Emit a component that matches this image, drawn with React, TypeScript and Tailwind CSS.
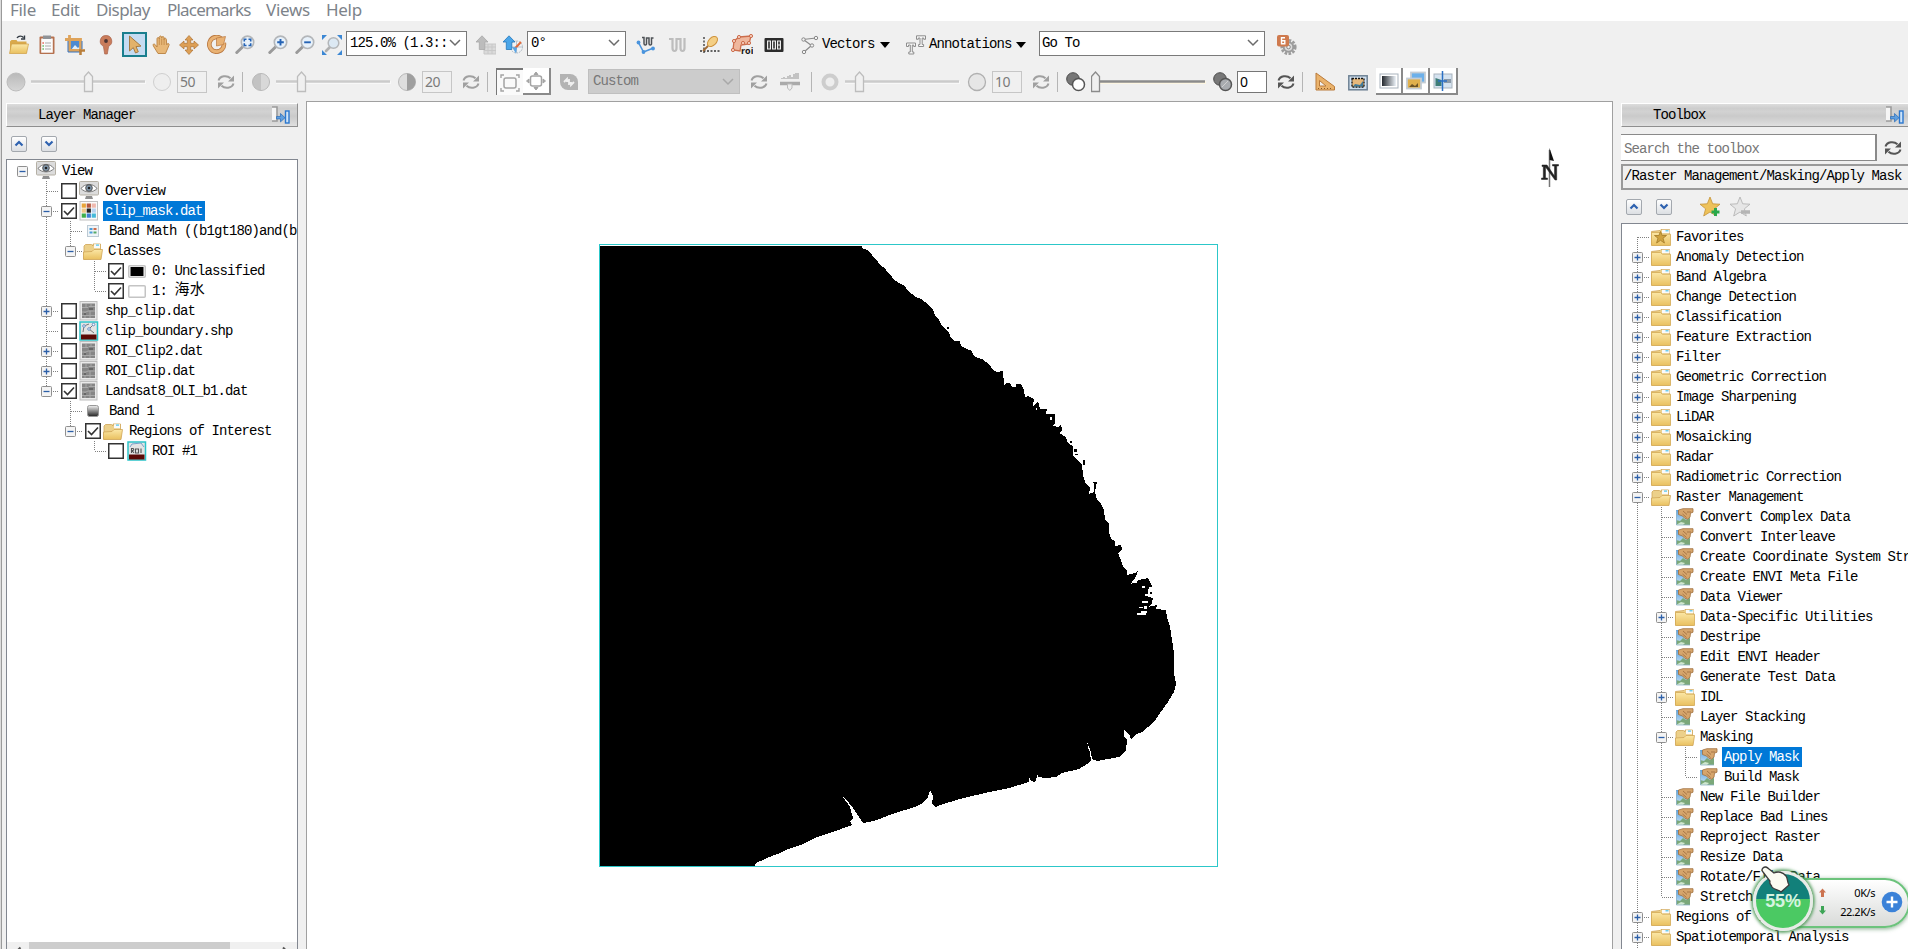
import React from "react";

type P = { children?: React.ReactNode; c?: string; w?: number; h?: number };

/** Small drawing area used by every icon. */
const Ico = ({ children, c = "", w = 20, h = 20 }: P) => (
  <svg width={w} height={h} viewBox={`0 0 ${w} ${h}`} className={`block shrink-0 ${c}`} fill="none">
    {children}
  </svg>
);

const Defs = () => (
  <svg width="0" height="0" className="absolute">
    <defs>
      <linearGradient id="fold" x1="0" y1="0" x2="0" y2="1">
        <stop offset="0" stopColor="#fbe7a6" />
        <stop offset="1" stopColor="#e9c05f" />
      </linearGradient>
      <linearGradient id="disc" x1="0" y1="0" x2="0" y2="1">
        <stop offset="0" stopColor="#b9b9b9" />
        <stop offset="1" stopColor="#d6d6d6" />
      </linearGradient>
      <linearGradient id="rule" x1="0" y1="0" x2="1" y2="0">
        <stop offset="0" stopColor="#23282e" />
        <stop offset="1" stopColor="#eef4fa" />
      </linearGradient>
      <linearGradient id="band" x1="0" y1="0" x2="0" y2="1">
        <stop offset="0" stopColor="#f4f4f4" />
        <stop offset="1" stopColor="#222" />
      </linearGradient>
      <linearGradient id="sky" x1="0" y1="0" x2="0" y2="1">
        <stop offset="0" stopColor="#5ba4e4" />
        <stop offset="1" stopColor="#cfe6f5" />
      </linearGradient>
    </defs>
  </svg>
);

/* ---------- tool bar icons ---------- */

const OpenIcon = ({ c }: P) => (
  <Ico c={c}>
    <path d="M1 18V6.500l1.500-1.500h5l1 1.500h9V18z" fill="#d9a94c" />
    <path d="M.5 18.500 2.500 9h17l-2 9.500z" fill="url(#fold)" stroke="#cf9f45" strokeWidth=".7" />
    <path d="M8 3c1.500-2.500 5-2.500 6.500-.3M15.500 .5v3.500H12" stroke="#333b44" strokeWidth="1.400" />
  </Ico>
);
const ClipboardIcon = ({ c }: P) => (
  <Ico c={c}>
    <rect x="2.500" y="1.500" width="15" height="17.500" rx="1" fill="#b5714f" />
    <rect x="4.200" y="3.500" width="11.600" height="14.200" fill="#fbfbfb" />
    <rect x="6" y="0.500" width="8" height="3.500" fill="#8f9296" />
    <path d="M8 8h6M8 11h6M8 14h6" stroke="#a9a9a9" strokeWidth="1" />
    <path d="M5.500 8h1.300" stroke="#e04b3a" strokeWidth="1.500" />
    <path d="M5.500 11h1.300M5.500 14h1.300" stroke="#4db14a" strokeWidth="1.500" />
  </Ico>
);
const CropIcon = ({ c }: P) => (
  <Ico c={c}>
    <rect x="5" y="5" width="11" height="11" fill="#4d8ad0" />
    <path d="M6 15l4-5 3 3 2-2v4z" fill="#dfeefb" />
    <path d="M0 4.500h15.500V17" stroke="#dea35a" strokeWidth="2.800" />
    <path d="M4.500 0v15.500H15" stroke="#dea35a" strokeWidth="2.800" />
    <path d="M3 6v11h12M17 6v8" stroke="#3572c0" strokeWidth="1" />
    <path d="M14 15.500h6M15.500 16v4" stroke="#b97f3b" strokeWidth="2.500" />
  </Ico>
);
const PinIcon = ({ c }: P) => (
  <Ico c={c}>
    <path d="M10 .5a5.700 5.700 0 0 1 2.600 10.800L11.300 19H8.700L7.400 11.300A5.700 5.700 0 0 1 10 .5z" fill="#c97c5b" stroke="#a9624a" strokeWidth=".7" />
    <circle cx="10" cy="6" r="1.900" fill="#4b3434" />
  </Ico>
);
const ArrowIcon = () => (
  <Ico w={21} h={21}>
    <path d="M5.500 2v15l3.800-3.400L11.500 19l2.800-1.200-2.300-5.200 5-.5z" fill="#e3b26a" stroke="#a67b42" strokeWidth="1" />
  </Ico>
);
const HandIcon = ({ c }: P) => (
  <Ico c={c}>
    <path d="M6 18.500l-4-6.500c-2-3 0-4 1.500-2L5 12V4c0-2 2.300-2 2.300 0V2.500c0-2 2.400-2 2.400 0V3c0-2 2.400-2 2.400 0v1.500c0-2 2.300-1.700 2.300.3l.3 5c.8-2 3-1.500 2.300.5L15 15l-1.500 3.500z" fill="#e8b878" stroke="#b9803f" strokeWidth=".9" />
    <path d="M7.300 4v6M9.700 3.500V10M12.100 4v6" stroke="#b9803f" strokeWidth=".7" />
  </Ico>
);
const MoveIcon = ({ c }: P) => (
  <Ico c={c}>
    <path d="M10 .5 14 5h-2.300v3.300H15V6l4.500 4-4.500 4v-2.300h-3.300V15H14l-4 4.500L6 15h2.300v-3.300H5V14L.5 10 5 6v2.300h3.300V5H6z" fill="#dd9f55" stroke="#ad7335" strokeWidth=".7" />
  </Ico>
);
const RotateIcon = ({ c }: P) => (
  <Ico c={c}>
    <path d="M14 3.500A7.300 7.300 0 1 0 16.800 8" stroke="#b9773f" strokeWidth="4.600" />
    <path d="M14 3.500A7.300 7.300 0 1 0 16.800 8" stroke="#e9b274" strokeWidth="3" />
    <path d="M9.500 11V3l9-1.500-2 8z" fill="#e9b274" stroke="#b9773f" strokeWidth=".7" />
  </Ico>
);
const Zoom = ({ c, kind }: { c: string; kind: string }) => (
  <Ico c={c}>
    <path d="M1.800 17.500 7.500 12" stroke="#9a9a9a" strokeWidth="3" strokeLinecap="round" />
    <circle cx="12.500" cy="7.300" r="6.200" fill="#e7f1fa" stroke="#b3b6b9" strokeWidth="1.600" />
    {kind === "in" && <path d="M12.500 4v6.600M9.200 7.300h6.600" stroke="#2563b4" strokeWidth="1.900" />}
    {kind === "out" && <path d="M9.200 7.300h6.600" stroke="#2563b4" strokeWidth="1.900" />}
    {kind === "sel" && (
      <path d="M9.300 6.500V4.300h2.200M13.500 4.300h2.200v2.200M15.700 8.300v2.200h-2.200M11.500 10.500H9.300V8.300" stroke="#2563b4" strokeWidth="1.600" />
    )}
  </Ico>
);
const FitIcon = ({ c }: P) => (
  <Ico c={c}>
    <path d="M4 16 8 12" stroke="#b0b0b0" strokeWidth="2.600" strokeLinecap="round" />
    <circle cx="11.500" cy="8" r="5.300" fill="#dce9f4" stroke="#b3b6b9" strokeWidth="1.500" />
    <path d="M0 5V0h5zM20 5V0h-5zM0 15v5h5zM20 15v5h-5z" fill="#3b87d4" />
  </Ico>
);
const UpGrid = ({ c, blue }: { c: string; blue?: boolean }) => (
  <Ico c={c}>
    {blue ? (
      <>
        <circle cx="13.500" cy="12" r="6" fill="#f1f3f5" stroke="#a9b4bf" strokeDasharray="1.500 1" />
        <path d="M13.500 6v12M8 12h11" stroke="#b9c3cd" />
        <path d="M11 14.500 18 7" stroke="#e06a3b" strokeWidth="2" />
        <path d="M9 12l4 6.500 1-6z" fill="#5aa6e6" />
      </>
    ) : (
      <path d="M8 9h12v10H8z M12 9v10M16 9v10M8 12h12M8 15.500h12" fill="#dadada" stroke="#c8c8c8" />
    )}
    <path d="M6 .8 12 7H8.800v7.500H3.300V7H0z" fill={blue ? "#4aa5e8" : "#bcbcbc"} stroke={blue ? "#2477bb" : "#a8a8a8"} strokeWidth=".8" />
  </Ico>
);
const SpecBlue = ({ c }: P) => (
  <Ico c={c}>
    <path d="M6 2.500h2v6q0 1.500 1.300 1.500t1.200-1.500V3H13v5.500q0 1.500 1.300 1.500t1.200-1.500V3h2" stroke="#4d5155" strokeWidth="1.500" />
    <path d="M2.500 7.500 7.500 17l10-4" stroke="#4a94dd" strokeWidth="1.600" />
    <circle cx="2.500" cy="7.500" r="1.900" fill="#4a94dd" />
    <circle cx="7.500" cy="17" r="1.900" fill="#4a94dd" />
    <circle cx="17" cy="13.500" r="1.900" fill="#4a94dd" />
  </Ico>
);
const SpecGray = ({ c }: P) => (
  <Ico c={c}>
    <path d="M1 4h3.500v9q0 3 2 3t2-3V4h4v9q0 3 2 3t2-3V3" stroke="#bdbdbd" strokeWidth="2.200" />
  </Ico>
);
const LassoIcon = ({ c }: P) => (
  <Ico c={c}>
    <path d="M4 2v17M0 16h20" stroke="#333" strokeWidth="1.300" strokeDasharray="2 1.500" />
    <ellipse cx="12.500" cy="6.500" rx="6" ry="3.800" transform="rotate(-45 12.500 6.500)" fill="#f4cf85" stroke="#cf943f" />
    <path d="M8 11l-5 5" stroke="#a26a33" strokeWidth="1.800" />
  </Ico>
);
const RoiIcon = ({ c }: P) => (
  <Ico c={c} w={22} h={21}>
    <path d="M3 7 8 3l12-1-2 8-8 1-1 6-7-1z" fill="#efb79d" stroke="#cc6d4c" strokeWidth="1.300" />
    {[[3, 7], [8, 3], [20, 2], [18, 9], [12, 9], [2, 16]].map(([x, y]) => (
      <circle key={`${x}-${y}`} cx={x} cy={y} r="1.600" fill="#f6d0c0" stroke="#cc6d4c" />
    ))}
    <text x="10" y="20" fontSize="9" fontWeight="700" fill="#151515" fontFamily="Open Sans" textLength="11.500">roi</text>
  </Ico>
);
const CounterIcon = ({ c }: P) => (
  <Ico c={c}>
    <rect x=".5" y="3" width="19" height="14" rx="1" fill="#2b2b2b" />
    {[3, 8, 13].map((x) => (
      <rect key={x} x={x + 0.5} y="6" width="3" height="8" fill="#555" stroke="#eee" />
    ))}
    <path d="M13 10h4" stroke="#eee" />
  </Ico>
);
const VectorsIcon = ({ c }: P) => (
  <Ico c={c}>
    <path d="M3 4.500 16 3M4 5l7.500 5.500L4 17" stroke="#8a8a8a" strokeWidth="1.200" />
    {[[3.500, 4.500], [16, 3], [12, 10.500], [4, 17]].map(([x, y]) => (
      <circle key={y} cx={x} cy={y} r="1.700" fill="#f3f3f3" stroke="#888" />
    ))}
  </Ico>
);
const AnnotIcon = ({ c }: P) => (
  <Ico c={c}>
    <path d="M10.500 .8h9v3.500h-1.800V3h-1.500v6.500h1.400v2h-5v-2h1.400V3h-1.700v1.300h-1.800z" fill="#f7f7f7" stroke="#8d8d8d" />
    <path d="M.5 8h9v3.500H7.700V10H6.300v7h1.500v2H2.800v-2h1.500v-7H2.500v1.500h-2z" fill="#f7f7f7" stroke="#8d8d8d" />
  </Ico>
);
const GearIcon = ({ c }: P) => (
  <Ico c={c}>
    <circle cx="11.500" cy="12" r="6.800" stroke="#9c9c9c" strokeWidth="2.600" strokeDasharray="2.600 1.400" />
    <circle cx="11.500" cy="12" r="4.800" fill="#dcdcdc" stroke="#9b9b9b" strokeWidth="2" />
    <circle cx="11.500" cy="12" r="1.800" fill="#f0f0f0" stroke="#8b8b8b" />
    <rect x="0" y="0" width="12" height="11.500" rx="2" fill="#cf7a4e" />
    <path d="M8 2.800H4.500v6h3.300V5.800H5" stroke="#fff" strokeWidth="1.400" />
  </Ico>
);
const Refresh = ({ c, tone = "#a0a0a0" }: { c: string; tone?: string }) => (
  <Ico c={c} w={18} h={16}>
    <path d="M1.500 6.500C3 1.500 10 1 13.500 4.200" stroke={tone} strokeWidth="2" />
    <path d="M17 1.500v6h-6z" fill={tone} />
    <path d="M16.500 9.500c-1.500 5-8.500 5.500-12 2.300" stroke={tone} strokeWidth="2" />
    <path d="M1 14.500v-6h6z" fill={tone} />
  </Ico>
);
const Down = ({ c }: P) => (
  <Ico c={c} w={10} h={6}>
    <path d="M0 0h10L5 6z" fill="#000" />
  </Ico>
);
const Chevron = ({ tone = "#6b6b6b" }: { tone?: string }) => (
  <Ico w={12} h={8} c="ml-auto mr-[5px]">
    <path d="M1 1l5 5 5-5" stroke={tone} strokeWidth="1.500" />
  </Ico>
);
const Sep = ({ c }: P) => <div className={`h-[20px] w-px shrink-0 bg-[#b5b5b5] ${c}`} />;

const Slider = ({ c, at, dark }: { c: string; at: number; dark?: boolean }) => (
  <Ico c={c} w={115} h={22}>
    <path d="M0 11.500h115" stroke={dark ? "#fdf6e2" : "#f8f8f8"} strokeWidth="3" />
    <path d="M0 10.500h114" stroke={dark ? "#8b8b8b" : "#cbcbcb"} strokeWidth="2.500" />
    <path d={`M${at + 0.5} 20.500V5.500L${at + 4.500} 1l4 4.500v15z`} fill="#f0f0f0" stroke={dark ? "#8b8b8b" : "#bdbdbd"} strokeWidth="1.300" />
  </Ico>
);
const Num = ({ c, v, dark }: { c: string; v: string; dark?: boolean }) => (
  <div
    className={`flex h-[22px] w-[30px] shrink-0 items-center pl-[2px] text-[14px] tracking-[-0.5px] [font-family:'Noto_Sans',sans-serif] ${c} ${
      dark ? "border border-[#767676] bg-white text-black" : "border border-[#c6c6c6] text-[#7b7b7b]"
    }`}
  >
    {v}
  </div>
);

/* ---------- panels ---------- */

const Dock = () => (
  <Ico c="ml-auto" w={18} h={18}>
    <path d="M0 1h5v14H0" stroke="#9b9b9b" strokeWidth="1.600" fill="#f5f5f5" />
    <path d="M4.500 10.500H8.500V7.500l4.500 4.200-4.500 4.200v-3h-4z" fill="#5f9fe0" stroke="#2a6cb8" strokeWidth=".7" />
    <rect x="13.500" y="5" width="3.500" height="12" fill="#cfe4f8" stroke="#2a77cf" strokeWidth="1.400" />
  </Ico>
);
const Fold = ({ c, up }: { c: string; up?: boolean }) => (
  <div className={`flex h-[16px] w-[16px] shrink-0 items-center justify-center rounded-[2px] border border-[#a3a8ae] bg-gradient-to-b from-white to-[#dcdfe3] ${c}`}>
    <Ico w={10} h={7}>
      <path d={up ? "M1.500 5.500 5 2l3.500 3.500" : "M1.500 1.500 5 5l3.500-3.500"} stroke="#2e62b0" strokeWidth="2.200" />
    </Ico>
  </div>
);

/* ---------- tree parts ---------- */

type Link = "none" | "pass" | "tee" | "end" | "top";
const Cell = ({ link, box }: { link: Link; box?: "+" | "-" }) => (
  <Ico w={24} h={20}>
    {(link === "pass" || link === "tee") && <path d="M11.500 0v20" stroke="#808080" strokeDasharray="1 1" />}
    {link === "end" && <path d="M11.500 0v10" stroke="#808080" strokeDasharray="1 1" />}
    {link === "top" && <path d="M11.500 10v10" stroke="#808080" strokeDasharray="1 1" />}
    {link !== "none" && link !== "pass" && <path d="M12 10.500h12" stroke="#808080" strokeDasharray="1 1" />}
    {box && (
      <>
        <rect x="6.500" y="5.500" width="10" height="10" rx="1" fill="#f4f4f4" stroke="#8f8f8f" />
        <path d={box === "+" ? "M8.500 10.500h6M11.500 7.500v6" : "M8.500 10.500h6"} stroke="#2c5fa8" strokeWidth="1.300" />
      </>
    )}
  </Ico>
);
const Check = ({ on, c }: { on?: boolean; c: string }) => (
  <Ico c={c} w={16} h={16}>
    <rect x=".75" y=".75" width="14.500" height="14.500" fill="#fff" stroke="#333" strokeWidth="1.500" />
    {on && <path d="M3 8l3.500 3.500L13 4.500" stroke="#333" strokeWidth="1.600" />}
  </Ico>
);
const Folder = ({ c, open, star }: { c: string; open?: boolean; star?: boolean }) => (
  <Ico c={c} w={20} h={17}>
    {open ? (
      <>
        <path d="M1 16V3l1.500-1.500h6L10 3V1h7.500v14z" fill="#ecd08a" stroke="#cfa555" strokeWidth=".8" />
        <path d="M11 1.200h6v4h-6z" fill="#fafafa" />
        <path d="M13 1.500h3v1.200h-3z" fill="#4cc3ea" />
        <path d="M.5 16.500V9L9 8.500l2-2h8.500l-1.500 10z" fill="url(#fold)" stroke="#cfa555" strokeWidth=".8" />
      </>
    ) : (
      <>
        <path d="M.5 16V2.500L9 1.500l1-1h8.500V16z" fill="#ecd08a" stroke="#cfa555" strokeWidth=".8" />
        <path d="M11 .8h7.500v3.500H11z" fill="#fafafa" />
        <path d="M14.500 1.200h3v1.200h-3z" fill="#4cc3ea" />
        <path d="M.5 16.500V3.500H9.500l2 1.700h8v11.300z" fill="url(#fold)" stroke="#d3a955" strokeWidth=".8" />
      </>
    )}
    {star && <path d="M9.500 2.500l1.600 4h4.400L12 9.200l1.400 4.800-3.900-2.700L5.600 14 7 9.200 3.500 6.500h4.400z" fill="#cfa23f" stroke="#a8802c" strokeWidth=".9" />}
  </Ico>
);
const Tool = ({ c }: P) => (
  <Ico c={c} w={19} h={18}>
    <path d="M1 2h14v15H1z" fill="url(#sky)" />
    <path d="M1 17v-5l4 1 3-3 3 2 4-2v7z" fill="#7ba87a" />
    <path d="M1 17l5-3 4 1-2 2z" fill="#cfe7cf" />
    <path d="M1.500 2.500v14.500h13.500" stroke="#8fb4c9" strokeWidth=".8" />
    <path d="M3.500 2 8 .7h10v3.500l-2.500 1-.5 4-2.500 2-2.500-.7L7.500 8 3.500 6.500z" fill="#d6a56c" stroke="#a0703f" strokeWidth=".8" />
    <path d="M8 3l4 3.500M7.500 6l4 3.500M12 4h4" stroke="#946338" strokeWidth=".7" />
  </Ico>
);
const Eye = ({ c }: P) => (
  <Ico c={c}>
    <rect x=".5" y=".5" width="19" height="13.500" rx="1" fill="#dcdcdc" stroke="#b5b0a5" />
    <path d="M7 15h6l1 3H6z" fill="#8f8f8f" />
    <path d="M2 7.500c4-5.500 12-5.500 16 0-4 4.500-12 4.500-16 0z" fill="#fff" stroke="#777" />
    <circle cx="10" cy="7" r="3.300" fill="#8097ab" stroke="#555" />
    <circle cx="10" cy="7" r="1.300" fill="#222" />
  </Ico>
);
const Raster = ({ c }: P) => (
  <Ico c={c}>
    <rect x="1" y=".5" width="17" height="18.500" fill="#e9e9e9" stroke="#bdbdbd" />
    <rect x="3" y="2.500" width="13" height="14.500" fill="#868686" />
    <path d="M3 6.500h6l1-1h6M3 11h4l2-1h7M7 3v4M6 11v6M11 10v7M12 3v3M3 14.500h13" stroke="#a9a9a9" />
    <path d="M10 8h4M5 13h2" stroke="#666" strokeWidth="2" />
  </Ico>
);
const ClassGrid = ({ c }: P) => {
  const k = ["#e9a53a", "#b5583e", "#efb9ae", "#f0c987", "#222", "#b9d3ef", "#3fae4a", "#3f7fd1", "#45b9d9"];
  return (
    <Ico c={c}>
      <rect x="1" y=".5" width="17.500" height="18.500" fill="#fafafa" stroke="#c0c0c0" />
      {k.map((f, i) => (
        <rect key={i} x={2.700 + (i % 3) * 5} y={2.500 + Math.floor(i / 3) * 5} width="4.200" height="4.200" fill={f} />
      ))}
    </Ico>
  );
};
const BandGrid = ({ c }: P) => (
  <Ico c={c} w={12} h={12}>
    <rect x=".5" y=".5" width="11" height="11" fill="#eef4f8" stroke="#bccad4" />
    <path d="M2.500 4h3M2.500 7.500h3" stroke="#4b9cd8" strokeWidth="2" />
    <path d="M6.500 4h3" stroke="#cc6b4b" strokeWidth="2" />
    <path d="M6.500 7.500h3" stroke="#55a868" strokeWidth="2" />
  </Ico>
);
const Shape = ({ c, roi }: { c: string; roi?: boolean }) => (
  <Ico c={c}>
    <rect x="1" y="1" width="17.500" height="18" fill="#e4e4e4" stroke="#2cc4c9" strokeWidth="1.500" />
    <rect x="2" y="13.500" width="15.500" height="5" fill="#5c0a06" />
    {roi ? (
      <>
        <path d="M3 6l2-3 9-1 3 4" stroke="#7aa0c9" />
        <path d="M4.500 12V7.500H6q1.500 1 0 2H5l2 2.500M8.500 8h3v4h-3zM14 7.500V12" stroke="#555" strokeWidth="1.100" />
      </>
    ) : (
      <>
        <path d="M4 11 5 5l5-2M15 3l-5 5 5 4" stroke="#777" />
        <circle cx="5" cy="5" r="1.300" fill="#fff" stroke="#6690c4" />
        <circle cx="10" cy="8" r="1.300" fill="#fff" stroke="#6690c4" />
        <circle cx="14.500" cy="3.500" r="1.300" fill="#fff" stroke="#6690c4" />
      </>
    )}
  </Ico>
);
const Swatch = ({ c, black }: { c: string; black?: boolean }) => (
  <Ico c={c} w={18} h={13}>
    <rect x=".75" y=".75" width="16.500" height="11.500" rx="1" fill="#fff" stroke="#c4c4c4" strokeWidth="1.500" />
    {black && <rect x="2.500" y="2" width="13" height="9" fill="#000" />}
  </Ico>
);
const BandIcon = ({ c }: P) => (
  <Ico c={c} w={12} h={12}>
    <rect x=".5" y=".5" width="11" height="11" rx="2" fill="url(#band)" stroke="#999" />
  </Ico>
);

const Label = ({ t, c, on }: { t: string; c: string; on?: boolean }) => (
  <span className={`whitespace-pre leading-[20px] ${c} ${on ? "bg-[#0078d7] pr-[3px] pl-[2px] text-white" : ""}`}>{t}</span>
);
const Row = ({ children }: P) => <div className="flex h-[20px] shrink-0 items-center">{children}</div>;

const topFolders = [
  "Anomaly Detection", "Band Algebra", "Change Detection", "Classification", "Feature Extraction", "Filter",
  "Geometric Correction", "Image Sharpening", "LiDAR", "Mosaicking", "Radar", "Radiometric Correction",
];
const rasterItems: [string, "t" | "f" | "o" | "m" | "s"][] = [
  ["Convert Complex Data", "t"], ["Convert Interleave", "t"], ["Create Coordinate System String", "t"],
  ["Create ENVI Meta File", "t"], ["Data Viewer", "t"], ["Data-Specific Utilities", "f"], ["Destripe", "t"],
  ["Edit ENVI Header", "t"], ["Generate Test Data", "t"], ["IDL", "f"], ["Layer Stacking", "t"], ["Masking", "o"],
  ["Apply Mask", "s"], ["Build Mask", "m"], ["New File Builder", "t"], ["Replace Bad Lines", "t"],
  ["Reproject Raster", "t"], ["Resize Data", "t"], ["Rotate/Flip Data", "t"], ["Stretch Data", "t"],
];

const TopFolder = ({ t }: { t: string }) => (
  <Row>
    <Cell link="tee" box="+" />
    <Folder c="ml-px" />
    <Label t={t} c="ml-[5px]" />
  </Row>
);

const LayerTree = () => (
  <div className="flex min-h-0 flex-1 flex-col overflow-hidden pt-px pl-[4px]">
    <Row><Cell link="none" box="-" /><Eye c="ml-[1px]" /><Label t="View" c="ml-[6px]" /></Row>
    <Row><Cell link="none" /><Cell link="tee" /><Check c="ml-[2px]" /><Eye c="ml-[2px]" /><Label t="Overview" c="ml-[6px]" /></Row>
    <Row><Cell link="none" /><Cell link="tee" box="-" /><Check on c="ml-[2px]" /><ClassGrid c="ml-[2px]" /><span className="ml-[4px] bg-[#0078d7] pr-[2px] pl-[2px] leading-[20px] text-white">clip_mask.dat</span></Row>
    <Row><Cell link="none" /><Cell link="pass" /><Cell link="tee" /><BandGrid c="ml-[4px]" /><Label t="Band Math ((b1gt180)and(b" c="ml-[10px]" /></Row>
    <Row><Cell link="none" /><Cell link="pass" /><Cell link="end" box="-" /><Folder open c="" /><Label t="Classes" c="ml-[5px]" /></Row>
    <Row><Cell link="none" /><Cell link="pass" /><Cell link="none" /><Cell link="tee" /><Check on c="ml-[1px]" /><Swatch black c="ml-[4px]" /><Label t="0: Unclassified" c="ml-[6px]" /></Row>
    <Row><Cell link="none" /><Cell link="pass" /><Cell link="none" /><Cell link="end" /><Check on c="ml-[1px]" /><Swatch c="ml-[4px]" /><Label t="1: " c="ml-[6px]" /><span className="text-[15px] leading-[20px] tracking-[0.200px]">海水</span></Row>
    <Row><Cell link="none" /><Cell link="tee" box="+" /><Check c="ml-[2px]" /><Raster c="ml-[2px]" /><Label t="shp_clip.dat" c="ml-[6px]" /></Row>
    <Row><Cell link="none" /><Cell link="tee" /><Check c="ml-[2px]" /><Shape c="ml-[2px]" /><Label t="clip_boundary.shp" c="ml-[6px]" /></Row>
    <Row><Cell link="none" /><Cell link="tee" box="+" /><Check c="ml-[2px]" /><Raster c="ml-[2px]" /><Label t="ROI_Clip2.dat" c="ml-[6px]" /></Row>
    <Row><Cell link="none" /><Cell link="tee" box="+" /><Check c="ml-[2px]" /><Raster c="ml-[2px]" /><Label t="ROI_Clip.dat" c="ml-[6px]" /></Row>
    <Row><Cell link="none" /><Cell link="end" box="-" /><Check on c="ml-[2px]" /><Raster c="ml-[2px]" /><Label t="Landsat8_OLI_b1.dat" c="ml-[6px]" /></Row>
    <Row><Cell link="none" /><Cell link="none" /><Cell link="tee" /><BandIcon c="ml-[4px]" /><Label t="Band 1" c="ml-[10px]" /></Row>
    <Row><Cell link="none" /><Cell link="none" /><Cell link="end" box="-" /><Check on c="ml-[2px]" /><Folder open c="ml-[2px]" /><Label t="Regions of Interest" c="ml-[6px]" /></Row>
    <Row><Cell link="none" /><Cell link="none" /><Cell link="none" /><Cell link="end" /><Check c="ml-[1px]" /><Shape roi c="ml-[3px]" /><Label t="ROI #1" c="ml-[5px]" /></Row>
  </div>
);

const coast =
  "600,246 862,246 862,248 867,250 871,253 873,257 878,262 880,265 885,268 888,273 892,277 893,279 899,283 905,286 907,290 912,294 915,297 921,299 925,302 928,305 933,310 935,315 939,320 942,326 945,329 949,333 951,338 955,341 960,341 961,346 965,348 972,351 973,354 975,357 982,359 989,364 993,370 997,372 1003,371 1004,385 1007,383 1010,383 1012,387 1016,387 1016,384 1021,384 1024,390 1025,397 1028,396 1034,399 1033,406 1038,401 1040,409 1047,409 1048,414 1055,414 1055,423 1052,426 1059,427 1061,424 1062,430 1059,433 1066,437 1068,443 1073,446 1073,456 1080,462 1082,465 1083,475 1086,484 1090,488 1089,494 1094,492 1094,484 1092,482 1097,482 1095,492 1097,500 1101,504 1104,510 1105,520 1109,523 1109,532 1111,539 1115,541 1115,546 1121,545 1122,549 1118,553 1121,560 1123,567 1127,571 1127,575 1135,573 1139,569 1135,578 1131,584 1139,580 1148,578 1151,584 1148,590 1148,597 1153,598 1152,603 1148,607 1157,605 1156,609 1166,610 1167,618 1170,626 1172,640 1174,653 1174,673 1176,684 1174,692 1168,702 1160,713 1154,722 1142,732 1137,734 1131,739 1129,734 1125,731 1124,728 1124,736 1127,740 1126,750 1123,754 1119,757 1097,761 1092,759 1091,752 1087,742 1090,753 1091,760 1087,764 1079,769 1062,773 1056,777 1046,778 1038,777 1037,772 1037,777 1035,782 1031,781 1029,777 1029,782 1009,788 989,792 960,799 940,805 936,807 932,804 933,796 930,790 928,797 921,804 915,807 895,813 874,821 863,823 859,817 853,808 846,799 843,797 850,807 853,818 850,821 852,825 833,832 817,837 803,844 788,849 780,853 774,855 756,863 755,866 600,866";

const whiteSpecks = [[1046, 411, 6, 3], [1050, 417, 2, 3], [1132, 581, 5, 2], [1142, 586, 3, 2], [1145, 594, 4, 2], [1142, 601, 6, 2], [1144, 606, 3, 3], [1137, 613, 9, 2], [1141, 611, 6, 2], [1139, 607, 4, 1], [1036, 408, 1, 2], [1088, 746, 1, 3]];
const blackSpecks = [[947, 327, 2, 2], [1070, 441, 2, 2], [1074, 449, 3, 3], [1075, 454, 3, 1], [1083, 460, 2, 5], [1149, 585, 3, 2], [1150, 592, 2, 2]];

const headBand = "bg-[linear-gradient(180deg,#dcdcdc_0%,#cdcdcd_20%,#d2d2d2_35%,#cacaca_55%,#d3d3d3_75%,#e0e0e0_100%)]";

export default function App() {
  return (
    <div className="relative flex h-[949px] w-[1908px] flex-col overflow-hidden bg-[#f0f0f0] text-[14px] tracking-[-0.900px] text-black [font-family:'Liberation_Mono','Noto_Sans_CJK_SC',monospace]">
      <Defs />
      <div className="flex h-[21px] shrink-0 items-start bg-white pl-[10px] text-[17px] leading-[20px] tracking-[-0.300px] text-[#7d838a] [font-family:'Noto_Sans',sans-serif]">
        <span className="w-[41px]">File</span>
        <span className="w-[45px] tracking-[-0.500px]">Edit</span>
        <span className="w-[71px] tracking-[-0.600px]">Display</span>
        <span className="w-[99px] tracking-[-0.800px]">Placemarks</span>
        <span className="w-[60px]">Views</span>
        <span>Help</span>
      </div>

      <div className="flex h-[47px] shrink-0 items-center">
        <OpenIcon c="ml-[9px]" />
        <ClipboardIcon c="ml-[8px]" />
        <CropIcon c="ml-[8px]" />
        <PinIcon c="ml-[11px]" />
        <div className="ml-[6px] flex h-[25px] w-[25px] shrink-0 items-center justify-center border-2 border-[#1a7f8e] bg-[#c5dcf2]"><ArrowIcon /></div>
        <HandIcon c="ml-[5px]" />
        <MoveIcon c="ml-[7px]" />
        <RotateIcon c="ml-[8px]" />
        <Zoom kind="sel" c="ml-[8px]" />
        <Zoom kind="in" c="ml-[13px]" />
        <Zoom kind="out" c="ml-[7px]" />
        <FitIcon c="ml-[7px]" />
        <div className="mb-[3px] ml-[4px] flex h-[25px] w-[121px] shrink-0 items-center border border-[#7a7a7a] bg-white pl-[3px]">
          <span className="w-[98px] whitespace-pre">125.0% (1.3::</span>
          <Chevron />
        </div>
        <UpGrid c="ml-[9px]" />
        <UpGrid blue c="ml-[7px]" />
        <div className="mb-[3px] ml-[4px] flex h-[25px] w-[99px] shrink-0 items-center border border-[#7a7a7a] bg-white pl-[3px]">
          0°<Chevron />
        </div>
        <SpecBlue c="ml-[10px]" />
        <SpecGray c="ml-[12px]" />
        <LassoIcon c="ml-[12px]" />
        <RoiIcon c="ml-[11px]" />
        <CounterIcon c="ml-[11px]" />
        <VectorsIcon c="ml-[16px]" />
        <span className="ml-[2px] w-[58px]">Vectors</span>
        <Down />
        <AnnotIcon c="ml-[16px]" />
        <span className="ml-[3px] w-[87px]">Annotations</span>
        <Down />
        <div className="mb-[3px] ml-[13px] flex h-[25px] w-[226px] shrink-0 items-center border border-[#7a7a7a] bg-white pl-[2px]">
          Go To<Chevron />
        </div>
        <GearIcon c="ml-[12px]" />
      </div>

      <div className="flex h-[33px] shrink-0 items-center pb-[6px]">
        <Ico c="ml-[6px]"><circle cx="10" cy="10" r="9" fill="url(#disc)" stroke="#bcbcbc" /></Ico>
        <Slider c="ml-[5px]" at={53} />
        <Ico c="ml-[6px]"><circle cx="10" cy="10" r="8.500" fill="#eee" stroke="#cfcfcf" /></Ico>
        <Num c="ml-[5px]" v="50" />
        <Refresh c="ml-[10px]" />
        <Sep c="ml-[7px]" />
        <Ico c="ml-[8px]"><circle cx="10" cy="10" r="8.500" fill="#c3c3c3" stroke="#b8b8b8" /><path d="M10 2a8 8 0 0 1 0 16z" fill="#d8d8d8" /></Ico>
        <Slider c="ml-[5px]" at={21} />
        <Ico c="ml-[6px]"><circle cx="10" cy="10" r="8.500" fill="#dedede" stroke="#b8b8b8" /><path d="M10 1.500a8.500 8.500 0 0 1 0 17z" fill="#9f9f9f" /></Ico>
        <Num c="ml-[5px]" v="20" />
        <Refresh c="ml-[10px]" />
        <Sep c="ml-[7px]" />
        <div className="ml-[8px] flex h-[27px] w-[27px] shrink-0 items-center justify-center border-t-2 border-l border-t-[#777] border-l-[#777] bg-[#fafafa]">
          <Ico><rect x="4" y="5" width="12" height="10" rx="2" stroke="#a4a4a4" strokeWidth="1.500" /><path d="M1 5V2h3M16 2h3v3M19 15v3h-3M4 18H1v-3" stroke="#a4a4a4" strokeWidth="1.400" /></Ico>
        </div>
        <div className="flex h-[27px] w-[28px] shrink-0 items-center justify-center border-r-2 border-b-2 border-[#8a8a8a] bg-white">
          <Ico><rect x="4.500" y="5" width="11" height="10" rx="2" stroke="#a4a4a4" strokeWidth="1.500" /><path d="M8 3.500 10 1l2 2.500zM8 16.500 10 19l2-2.500zM3 8 .5 10 3 12zM17 8l2.500 2L17 12z" fill="#a4a4a4" stroke="#a4a4a4" /></Ico>
        </div>
        <Ico c="ml-[8px]"><path d="M1 2h10a8 8 0 0 1 8 8v8H9a8 8 0 0 1-8-8z" fill="#b3b3b3" /><path d="M5 10l3-3v2h2v4M15 10l-3 3v-2h-2V7" stroke="#f0f0f0" strokeWidth="1.800" /></Ico>
        <div className="ml-[9px] flex h-[25px] w-[152px] shrink-0 items-center border border-[#bfbfbf] bg-[#cccccc] pl-[4px] text-[#777]">Custom<Chevron tone="#a8a8a8" /></div>
        <Refresh c="ml-[10px]" />
        <Ico c="ml-[12px]"><path d="M1 6h2V5h2v1h2V4h2V3h2v2h2V2h2V1h4v6H1z" fill="#c3c3c3" /><path d="M0 11.500h20" stroke="#aaa" strokeWidth="3.500" /><path d="M7.500 12h4.500v4l-2.200 2.500L7.500 16z" fill="#eee" stroke="#bbb" /></Ico>
        <Sep c="ml-[11px]" />
        <Ico c="ml-[8px]"><circle cx="10" cy="10" r="6.500" fill="#eee" stroke="#cdcdcd" strokeWidth="4" /></Ico>
        <Slider c="ml-[5px]" at={10} />
        <Ico c="ml-[7px]"><circle cx="10" cy="10" r="8.500" fill="#e6e6e6" stroke="#b0b0b0" strokeWidth="1.300" /></Ico>
        <Num c="ml-[5px]" v="10" />
        <Refresh c="ml-[10px]" />
        <Sep c="ml-[7px]" />
        <Ico c="ml-[8px]"><circle cx="7" cy="7" r="6.300" fill="#777" stroke="#4b4b4b" /><circle cx="12.500" cy="12.500" r="6" fill="#fff" stroke="#555" strokeWidth="1.500" /></Ico>
        <Slider c="ml-[5px]" at={0} dark />
        <Ico c="ml-[7px]"><circle cx="7" cy="7" r="6.300" fill="#777" stroke="#4b4b4b" /><circle cx="12.500" cy="12.500" r="6" fill="#a9acb0" stroke="#555" strokeWidth="1.500" /><path d="M9 15l6-6" stroke="#d0d0d0" /></Ico>
        <Num c="ml-[4px]" v="0" dark />
        <Refresh c="ml-[10px]" tone="#555" />
        <Sep c="ml-[7px]" />
        <Ico c="ml-[12px]"><path d="M1 1v17h18.500v-3.500z" fill="#eab36c" stroke="#b97a3b" /><path d="M4.500 8.500V14H11z" fill="#f0f0f0" stroke="#b97a3b" /><path d="M3 16.500h15" stroke="#8a5a2a" strokeDasharray="1 2" /></Ico>
        <Ico c="ml-[13px]"><rect x=".8" y="3.800" width="18.400" height="14" fill="#cfe0f0" stroke="#6f8294" strokeWidth="1.500" /><rect x="4" y="6.500" width="12" height="8.500" fill="#e6b87c" stroke="#111" strokeWidth="1.300" strokeDasharray="2 1" /><path d="M5 14.500l2-2.500 5 1 3-4v5.500z" fill="#3e7a9c" /></Ico>
        <div className="ml-[8px] flex h-[27px] w-[27px] shrink-0 items-center justify-center border-r-2 border-b-2 border-[#8a8a8a] bg-white">
          <Ico><rect x="1" y="3" width="18" height="14" fill="#fff" stroke="#a9b3bd" /><rect x="3" y="5" width="14" height="10" fill="url(#rule)" /></Ico>
        </div>
        <div className="flex h-[27px] w-[27px] shrink-0 items-center justify-center border-r-2 border-b-2 border-[#8a8a8a] bg-white">
          <Ico><rect x="5" y="1.500" width="14" height="10" fill="#6cb0ea" stroke="#c4ccd4" strokeWidth="1.800" /><rect x="1" y="7.500" width="14" height="10" fill="#e0b04c" stroke="#c4ccd4" strokeWidth="1.800" /><path d="M3 16l3-3 3 2 3-3v4z" fill="#6d5426" /></Ico>
        </div>
        <div className="flex h-[27px] w-[28px] shrink-0 items-center justify-center border-r-2 border-b-2 border-[#8a8a8a] bg-white">
          <Ico><rect x="1" y="3" width="18" height="14" fill="#d5e3f0" stroke="#a9b3bd" /><path d="M2.500 7l6 2v6h-6z" fill="#3f7d78" /><path d="M11 10h7" stroke="#8c9aa8" strokeWidth="4" /><path d="M9.500 0v20M5 10h9" stroke="#2a6fc4" strokeWidth="1.500" /></Ico>
        </div>
      </div>

      <div className="flex min-h-0 flex-1">
        {/* layer manager */}
        <div className="ml-[6px] flex w-[292px] shrink-0 flex-col">
          <div className={`mt-[2px] flex h-[24px] shrink-0 items-center border border-t-white border-r-[#8f8f8f] border-b-[#8f8f8f] border-l-white pr-[7px] pl-[31px] ${headBand}`}>
            Layer Manager<Dock />
          </div>
          <div className="flex h-[31px] shrink-0 items-center pt-[2px] pl-[5px]">
            <Fold up c="" />
            <Fold c="ml-[14px]" />
          </div>
          <div className="mt-px flex min-h-0 flex-1 flex-col border-x border-t border-[#828790] bg-white">
            <LayerTree />
            <div className="flex h-[7px] shrink-0 bg-[#f0f0f0]">
              <Ico w={22} h={7}><path d="M10.500 8.500l3-3" stroke="#555" strokeWidth="2" /></Ico>
              <div className="w-[201px] bg-[#cdcdcd]" />
              <Ico w={22} h={7} c="ml-auto"><path d="M8 5.500l3 3" stroke="#555" strokeWidth="2" /></Ico>
            </div>
          </div>
        </div>

        {/* image view */}
        <div className="ml-[8px] w-[1307px] shrink-0 border border-b-0 border-[#a0a0a0] bg-white">
          <svg width="1305" height="847" viewBox="307 102 1305 847" className="block">
            <g shapeRendering="crispEdges">
              <polygon points={coast} fill="#000" />
              {whiteSpecks.map(([x, y, w, h]) => <rect key={`${x}.${y}`} x={x} y={y} width={w} height={h} fill="#fff" />)}
              {blackSpecks.map(([x, y, w, h]) => <rect key={`${x}.${y}`} x={x} y={y} width={w} height={h} fill="#000" />)}
              <rect x="599.500" y="244.500" width="618" height="622" fill="none" stroke="#2cc7c9" />
            </g>
            <path d="M1549.500 150v37" stroke="#777" strokeWidth="1.500" />
            <path d="M1549.500 148l4.500 13-4.500-1z" fill="#111" />
            <path d="M1542 165h5l7.500 11v-10h-2v-1.500h6v1.500h-1.800v14h-1.700l-9.500-13v11h2v1.500h-6V178h1.800v-11.500H1542z" fill="#222" stroke="#222" strokeWidth=".5" />
          </svg>
        </div>

        {/* toolbox */}
        <div className="ml-[8px] flex min-w-0 flex-1 flex-col">
          <div className={`mt-[2px] flex h-[24px] shrink-0 items-center border border-r-0 border-t-white border-b-[#8f8f8f] border-l-white pr-[4px] pl-[31px] ${headBand}`}>
            Toolbox<Dock />
          </div>
          <div className="mt-[7px] flex h-[27px] shrink-0 items-center">
            <div className="flex h-[27px] w-[256px] items-center border-y border-r-2 border-[#8a8a8a] bg-white pt-[3px] pl-[3px] text-[#777]">Search the toolbox</div>
            <Refresh c="ml-[7px]" tone="#555" />
          </div>
          <div className="mt-[3px] flex h-[26px] shrink-0 items-center border-2 border-r-0 border-[#9a9a9a] pb-px pl-px whitespace-pre">/Raster Management/Masking/Apply Mask</div>
          <div className="flex h-[33px] shrink-0 items-center pl-[5px]">
            <Fold up c="" />
            <Fold c="ml-[14px]" />
            <Ico c="ml-[28px]"><path d="M10 0l2.700 6.800 7.300.4-5.600 4.600L16.300 19 10 15l-6.300 4 1.900-7.200L0 7.200l7.300-.4z" fill="#eec25a" stroke="#c4933a" strokeWidth=".8" /><path d="M15.500 11v8M11.500 15h8" stroke="#2aa84a" strokeWidth="3" /></Ico>
            <Ico c="ml-[10px]"><path d="M10 0l2.700 6.800 7.300.4-5.600 4.600L16.300 19 10 15l-6.300 4 1.900-7.200L0 7.200l7.300-.4z" fill="#e6e6e6" stroke="#b5b5b5" strokeWidth=".9" /><path d="M11 15h9" stroke="#b5b5b5" strokeWidth="3.500" /></Ico>
          </div>
          <div className="flex min-h-0 flex-1 flex-col overflow-hidden border-t border-l border-[#828790] bg-white pt-[3px] pl-[4px]">
            <Row><Cell link="top" /><Folder star c="ml-px" /><Label t="Favorites" c="ml-[5px]" /></Row>
            {topFolders.map((t) => <TopFolder key={t} t={t} />)}
            <Row><Cell link="tee" box="-" /><Folder open c="ml-px" /><Label t="Raster Management" c="ml-[5px]" /></Row>
            {rasterItems.map(([t, k], i) => {
              if (k === "m" || k === "s")
                return (
                  <Row key={t}>
                    <Cell link="pass" /><Cell link="pass" /><Cell link={k === "m" ? "end" : "tee"} />
                    <Tool c="ml-px" />
                    <Label t={t} c={k === "s" ? "ml-[4px]" : "ml-[6px]"} on={k === "s"} />
                  </Row>
                );
              const link: Link = i === rasterItems.length - 1 ? "end" : "tee";
              return (
                <Row key={t}>
                  <Cell link="pass" /><Cell link={link} box={k === "f" ? "+" : k === "o" ? "-" : undefined} />
                  {k === "t" ? <Tool c="ml-px" /> : <Folder open={k === "o"} c="ml-px" />}
                  <Label t={t} c={k === "t" ? "ml-[6px]" : "ml-[5px]"} />
                </Row>
              );
            })}
            <TopFolder t="Regions of Interest" />
            <TopFolder t="Spatiotemporal Analysis" />
            <TopFolder t="Spectral" />
          </div>
        </div>
      </div>

      {/* window edge */}
      <div className="absolute top-0 left-0 h-[949px] w-[2px] border-r border-[#9a9a9a] bg-[#dcdcdc]" />

      {/* network meter */}
      <div className="absolute top-[878px] left-[1780px] flex h-[50px] w-[130px] items-center rounded-r-full border-2 border-[#6cc37c] bg-gradient-to-b from-white to-[#d9dbd9] pr-[5px] pb-[2px] pl-[36px] text-[11px] tracking-[-0.450px] shadow-[0_1px_4px_rgba(60,120,70,0.6)] [font-family:'Noto_Sans',sans-serif]">
        <Ico w={9} h={30}>
          <path d="M4.500 1.500 8 5.500H6V10H3V5.500H1z" fill="#cc7350" />
          <path d="M4.500 27.500 8 23.500H6V19H3v4.500H1z" fill="#3da556" />
        </Ico>
        <div className="ml-auto flex flex-col items-end leading-[19px]">
          <span>0K/s</span>
          <span>22.2K/s</span>
        </div>
        <Ico w={22} h={22} c="ml-[6px]"><circle cx="11" cy="11" r="10.300" fill="#3b82d8" /><path d="M11 5.500v11M5.500 11h11" stroke="#fff" strokeWidth="2.400" /></Ico>
      </div>
      <div className="absolute top-[871px] left-[1753px] flex h-[60px] w-[60px] items-center justify-center rounded-full border-[3px] border-[#e7ebe7] bg-gradient-to-b from-[#12807a] from-[46%] to-[#4bc963] to-[46%] text-[18px] font-bold tracking-[-0.100px] text-[#d5f3e0] shadow-[0_0_3px_2px_rgba(70,150,80,0.8)] [font-family:'Liberation_Sans',sans-serif]">
        55%
      </div>
      <div className="absolute top-[866px] left-[1761px]">
        <Ico w={32} h={28}>
          <path d="M2 2c2-2 4-1 6 1l5 4c4-2 9-1 12 3 2 3 1 6 3 9l-8 7c-3-3-7-2-9-5-1-3-3-3-2-6L2 6C0 4 1 3 2 2z" fill="#fbfbf2" stroke="#3b3b3b" strokeWidth="1.300" />
        </Ico>
      </div>
    </div>
  );
}
